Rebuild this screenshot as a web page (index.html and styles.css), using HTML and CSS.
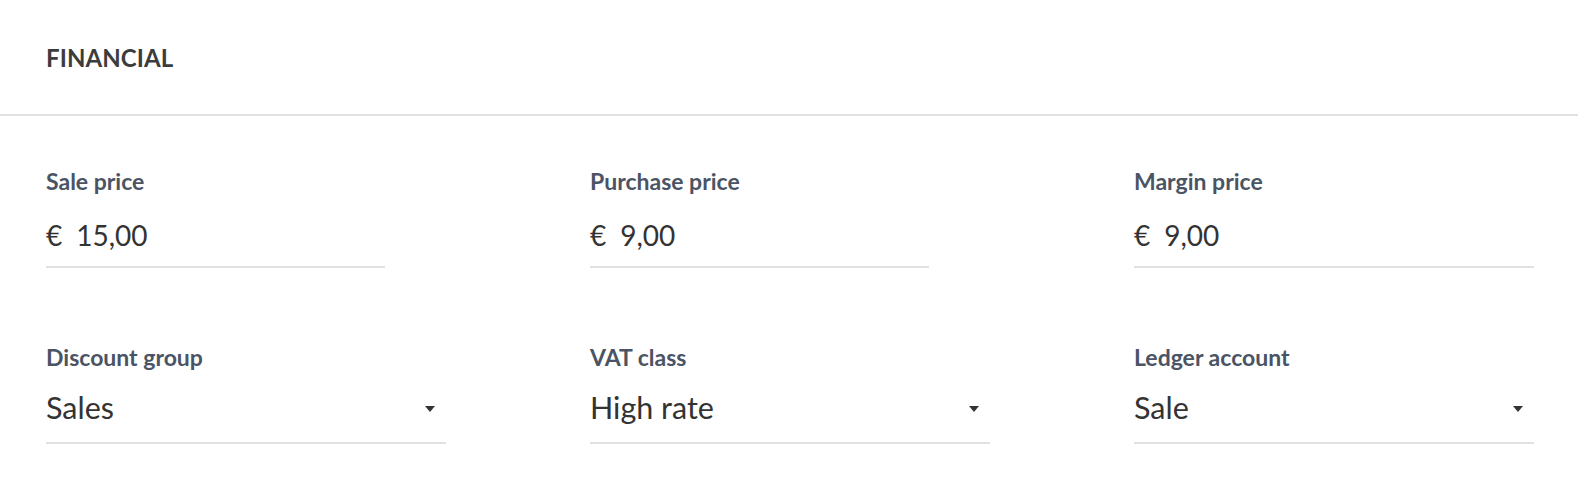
FILE: index.html
```html
<!DOCTYPE html>
<html lang="en">
<head>
<meta charset="utf-8">
<title>Financial</title>
<link rel="stylesheet" href="styles.css">
</head>
<body>
<section class="panel">
  <header class="panel-header">
    <h2 class="panel-title">FINANCIAL</h2>
  </header>
  <div class="fields">
    <div class="field">
      <div class="field-label">Sale price</div>
      <div class="field-input short"><span class="currency">€</span><span class="amount">15,00</span></div>
    </div>
    <div class="field">
      <div class="field-label">Purchase price</div>
      <div class="field-input short"><span class="currency">€</span><span class="amount">9,00</span></div>
    </div>
    <div class="field">
      <div class="field-label">Margin price</div>
      <div class="field-input"><span class="currency">€</span><span class="amount">9,00</span></div>
    </div>
    <div class="field">
      <div class="field-label">Discount group</div>
      <div class="field-select"><span class="select-value">Sales</span><span class="caret"></span></div>
    </div>
    <div class="field">
      <div class="field-label">VAT class</div>
      <div class="field-select"><span class="select-value">High rate</span><span class="caret"></span></div>
    </div>
    <div class="field">
      <div class="field-label">Ledger account</div>
      <div class="field-select"><span class="select-value">Sale</span><span class="caret"></span></div>
    </div>
  </div>
</section>
</body>
</html>
```
FILE: styles.css
```css
* { box-sizing: border-box; }
html, body {
  margin: 0;
  padding: 0;
  background: #ffffff;
  font-family: "Lato", "Liberation Sans", sans-serif;
  overflow: hidden;
}
.panel-header {
  height: 116px;
  padding-left: 46px;
  display: flex;
  align-items: center;
  border-bottom: 2px solid #e2e2e2;
}
.panel-title {
  margin: 0;
  font-size: 24px;
  font-weight: 700;
  color: #3c3c3c;
  letter-spacing: 0.1px;
}
.fields {
  display: grid;
  grid-template-columns: repeat(3, minmax(0, 1fr));
  column-gap: 144px;
  row-gap: 76px;
  padding: 52px 44px 0 46px;
}
.field-label {
  font-size: 23px;
  line-height: 26px;
  font-weight: 700;
  color: #4a5464;
  margin-bottom: 17px;
}
.field-input,
.field-select {
  height: 57px;
  display: flex;
  align-items: flex-end;
  border-bottom: 2px solid #e2e2e2;
  color: #333333;
}
.field-input {
  padding-bottom: 11px;
}
.field-select {
  padding-bottom: 15px;
}
.field-input.short {
  width: 339px;
}
.currency {
  font-size: 28px;
  line-height: 40px;
  margin-right: 14px;
}
.amount {
  font-size: 28px;
  line-height: 40px;
}
.select-value {
  flex: 1;
  font-size: 30.5px;
  line-height: 40px;
}
.caret {
  width: 0;
  height: 0;
  border-left: 5px solid transparent;
  border-right: 5px solid transparent;
  border-top: 6px solid #333333;
  margin-right: 11px;
  margin-bottom: 15px;
}
```
